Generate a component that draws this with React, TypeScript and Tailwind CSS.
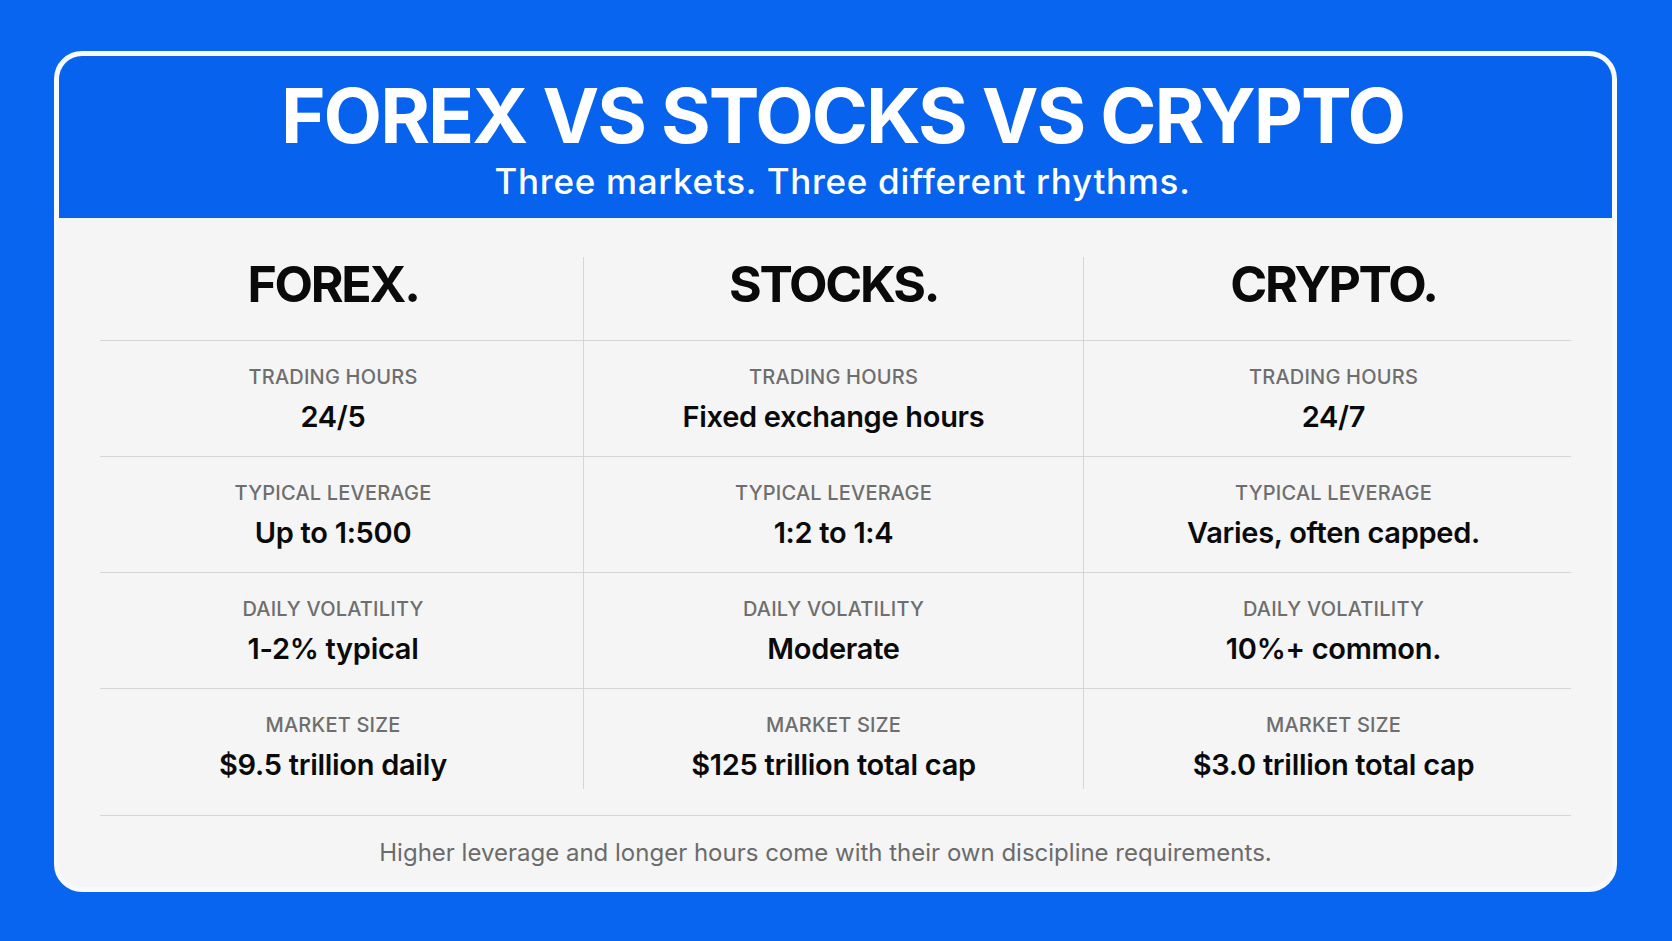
const markets = [
  {
    name: 'FOREX.',
    stats: ['24/5', 'Up to 1:500', '1-2% typical', '$9.5 trillion daily']
  },
  {
    name: 'STOCKS.',
    stats: ['Fixed exchange hours', '1:2 to 1:4', 'Moderate', '$125 trillion total cap']
  },
  {
    name: 'CRYPTO.',
    stats: ['24/7', 'Varies, often capped.', '10%+ common.', '$3.0 trillion total cap']
  }
]

const labels = ['TRADING HOURS', 'TYPICAL LEVERAGE', 'DAILY VOLATILITY', 'MARKET SIZE']

function Line() {
  return <div className="ml-[17px] h-px w-[1471px] bg-[#d6d6d6]" />
}

export default function App() {
  return (
    <div className="h-[941px] w-full bg-[#0865f0] pl-[54px] pt-[51px] font-['Inter',sans-serif]">
      <div className="flex h-[841px] w-[1563px] flex-col overflow-hidden rounded-[28px] border-[5px] border-[#f8f9fb] bg-[#f5f5f5]">
        {/* Header */}
        <div className="bg-[#0763ee] pb-[19px] pl-[14px] pt-[21px] text-center text-white">
          <h1 className="text-[76px] font-bold leading-none tracking-[-0.026em]">FOREX VS STOCKS VS CRYPTO</h1>
          <p className="mt-[11px] text-[35px] font-medium leading-none tracking-[0.02em]">
            Three markets. Three different rhythms.
          </p>
        </div>

        {/* Table */}
        <div className="ml-[24px] w-[1500px] pt-[39px]">
          <div className="grid grid-cols-3">
            {markets.map((m, i) => (
              <div
                key={m.name}
                className={`flex h-[83px] justify-center pt-[2px] ${i > 0 ? 'border-l border-[#d6d6d6]' : ''}`}
              >
                <h2 className="text-[50px] font-bold leading-none tracking-[-0.045em] text-[#0a0a0a]">
                  {m.name}
                </h2>
              </div>
            ))}
          </div>

          {labels.map((label, r) => (
            <div key={label}>
              <Line />
              <div className="grid grid-cols-3">
                {markets.map((m, i) => (
                  <div
                    key={m.name}
                    className={`flex flex-col items-center pt-[26px] ${r === labels.length - 1 ? 'pb-[10px]' : 'pb-[25px]'} ${
                      i > 0 ? 'border-l border-[#d6d6d6]' : ''
                    }`}
                  >
                    <span className="text-[20px] font-medium leading-none tracking-[0.01em] text-[#6e6e6e]">{label}</span>
                    <span className="mt-[15px] text-[29px] font-semibold leading-none tracking-[-0.01em] text-[#0a0a0a]">
                      {m.stats[r]}
                    </span>
                  </div>
                ))}
              </div>
            </div>
          ))}

          <div className="mt-[26px]">
            <Line />
          </div>
          <p className="ml-[17px] mt-[25px] w-[1471px] pr-[20px] text-center text-[24px] leading-none text-[#6b6b6b]">
            Higher leverage and longer hours come with their own discipline requirements.
          </p>
        </div>
      </div>
    </div>
  )
}
